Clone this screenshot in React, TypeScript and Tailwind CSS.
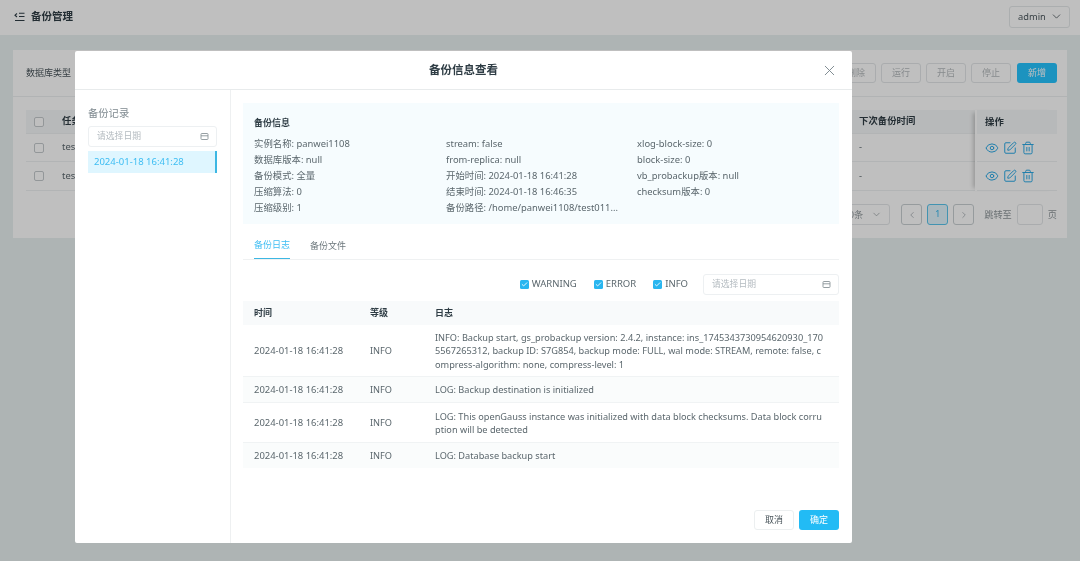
import React from "react";
import { Check, ChevronDown, ChevronLeft, ChevronRight, Eye, SquarePen, Trash2, X } from "lucide-react";

const FONT = "[font-family:'Noto_Sans','Noto_Sans_CJK_SC',sans-serif]";

const infoCols = [
  ["实例名称: panwei1108", "数据库版本: null", "备份模式: 全量", "压缩算法: 0", "压缩级别: 1"],
  ["stream: false", "from-replica: null", "开始时间: 2024-01-18 16:41:28", "结束时间: 2024-01-18 16:46:35", "备份路径: /home/panwei1108/test011..."],
  ["xlog-block-size: 0", "block-size: 0", "vb_probackup版本: null", "checksum版本: 0"],
];

const logs = [
  {
    h: "h-[52px]",
    lines: [
      "INFO: Backup start, gs_probackup version: 2.4.2, instance: ins_1745343730954620930_170",
      "5567265312, backup ID: S7G854, backup mode: FULL, wal mode: STREAM, remote: false, c",
      "ompress-algorithm: none, compress-level: 1",
    ],
  },
  { h: "h-[26px]", lines: ["LOG: Backup destination is initialized"] },
  {
    h: "h-[40px]",
    lines: [
      "LOG: This openGauss instance was initialized with data block checksums. Data block corru",
      "ption will be detected",
    ],
  },
  { h: "h-[25px]", lines: ["LOG: Database backup start"] },
];

const CalendarIcon = () => (
  <svg width="9" height="9" viewBox="0 0 9 9" fill="none" stroke="#8a9499" strokeWidth="0.9">
    <rect x="1" y="1.5" width="7" height="6" rx="0.8" />
    <path d="M1 3.8h7" />
  </svg>
);

const DateInput = ({ className }: { className: string }) => (
  <div className={`flex h-[21px] items-center justify-between rounded-[3px] border border-[#edf0f2] bg-white pl-2 pr-[7px] text-[8.8px] leading-none text-[#b4bbc0] ${className}`}>
    <span>请选择日期</span>
    <CalendarIcon />
  </div>
);

const LogCheck = ({ label }: { label: string }) => (
  <label className="flex items-center gap-[3px] text-[9.5px] text-[#5b676d]">
    <span className="flex h-[9px] w-[9px] items-center justify-center rounded-[1.5px] bg-[#29b6f0]">
      <Check size={7} strokeWidth={3} className="text-white" />
    </span>
    {label}
  </label>
);

const GhostBtn = ({ label }: { label: string }) => (
  <div className="flex h-[20px] w-[40px] items-center justify-center rounded-[3px] border border-[#e3e6e8] text-[9px] text-[#b4b9bc]">
    {label}
  </div>
);

const PageBox = ({ children, active }: { children: React.ReactNode; active?: boolean }) => (
  <div className={`flex h-[21px] w-[21px] items-center justify-center rounded-[3px] border text-[9.5px] ${active ? "border-[#58c4ec] bg-[#e2f5fd] text-[#3ab8ee]" : "border-[#c9cfd2] text-[#a9b0b4]"}`}>
    {children}
  </div>
);

// page behind the dialog
const BackPage = () => (
  <div className="flex h-[561px] flex-col bg-[#e9f0f0]">
    <header className="flex h-[35px] shrink-0 items-center justify-between bg-[#ffffff] pb-[5px] pl-[14px] pr-[10px] pt-[3px]">
      <div className="flex items-center gap-[6px]">
        <svg width="11" height="10" viewBox="0 0 11 10" fill="none" stroke="#2f3d45" strokeWidth="1.1">
          <path d="M3 1.5 1 3.2 3 5M5 1.2h5.5M5 4.5h5.5M1 8.5h9.5" />
        </svg>
        <span className="text-[10.5px] font-bold text-[#2f3d45]">备份管理</span>
      </div>
      <div className="flex h-[22px] w-[61px] items-center justify-between rounded-[3px] border border-[#e5e8ea] pl-2 pr-[6px] text-[9.3px] text-[#4b565c]">
        admin
        <ChevronDown size={13} strokeWidth={1.5} />
      </div>
    </header>
    <div className="mx-[13px] mt-[15px] h-[188px] bg-white">
      <div className="flex h-[47px] items-center justify-between border-b border-[#eceff0] pl-[13px] pr-[10px]">
        <span className="text-[9px] text-[#4b565c]">数据库类型</span>
        <div className="flex items-center gap-[5px]">
          <GhostBtn label="删除" />
          <GhostBtn label="运行" />
          <GhostBtn label="开启" />
          <GhostBtn label="停止" />
          <div className="ml-[1px] flex h-[20px] w-[40px] items-center justify-center rounded-[3px] bg-[#26c4ff] text-[9px] text-white">新增</div>
        </div>
      </div>
      <div className="ml-[13px] mr-[10px] mt-[13px] flex text-[9.4px] text-[#5b676d]">
        <div className="flex-1">
          {[0, 1, 2].map((i) => (
            <div key={i} className={`flex items-center border-b border-[#eef1f2] ${i === 0 ? "h-[24px] bg-[#f5f7f8] font-bold text-[#2f3d45]" : i === 1 ? "h-[28px]" : "h-[29px]"}`}>
              <span className="ml-[8px] h-[10px] w-[10px] rounded-[2px] border border-[#c5cacd] bg-white" />
              <span className="ml-[18px] w-[797px]">{i === 0 ? "任务" : "test"}</span>
              <span>{i === 0 ? "下次备份时间" : "-"}</span>
            </div>
          ))}
        </div>
        <div className="w-[82px] pl-[2px] shadow-[-5px_0_4px_-3px_rgba(0,0,0,0.2)]">
          <div className="flex h-[24px] items-center bg-[#f5f7f8] pl-[8px] font-bold text-[#2f3d45]">操作</div>
          {[0, 1].map((i) => (
            <div key={i} className={`flex items-center gap-[4px] border-b border-[#eef1f2] pl-[8px] text-[#2aa9e6] ${i === 0 ? "h-[28px]" : "h-[29px]"}`}>
              <Eye size={14} strokeWidth={1.7} />
              <SquarePen size={14} strokeWidth={1.7} />
              <Trash2 size={14} strokeWidth={1.7} />
            </div>
          ))}
        </div>
      </div>
      <div className="mt-[13px] flex items-center justify-end gap-[5px] pr-[10px] text-[9.2px] text-[#8f979b]">
        <div className="mr-[6px] flex h-[21px] w-[60px] items-center justify-end gap-[8px] rounded-[3px] border border-[#e3e6e8] pr-[7px]">
          10条
          <ChevronDown size={11} strokeWidth={1.5} />
        </div>
        <PageBox><ChevronLeft size={10} /></PageBox>
        <PageBox active>1</PageBox>
        <PageBox><ChevronRight size={10} /></PageBox>
        <span className="ml-[5px]">跳转至</span>
        <div className="h-[21px] w-[26px] rounded-[3px] border border-[#e3e6e8]" />
        <span>页</span>
      </div>
    </div>
  </div>
);

const App = () => {
  return (
    <div className={`relative h-[561px] w-[1080px] overflow-hidden blur-[0.3px] ${FONT}`}>
      <BackPage />
      <div className="absolute inset-0 bg-black/25" />

      {/* Dialog */}
      <div className="absolute left-[75px] top-[51px] flex h-[492px] w-[777px] flex-col rounded-[2px] bg-white">
        <div className="relative flex h-[39px] shrink-0 items-center justify-center border-b border-[#e8ebec]">
          <span className="text-[11.5px] font-bold text-[#2f3d45]">备份信息查看</span>
          <X size={17} strokeWidth={1.3} className="absolute right-[14px] top-[11px] text-[#77848a]" />
        </div>

        <div className="flex min-h-0 flex-1">
          {/* Left panel */}
          <aside className="w-[156px] shrink-0 border-r border-[#eef0f1] pl-[13px] pr-[13px] pt-[16px]">
            <div className="text-[10.3px] leading-[15px] text-[#7e898f]">备份记录</div>
            <DateInput className="mt-[5px]" />
            <div className="mt-[4px] flex h-[22px] items-center border-r-[2px] border-[#3db7e3] bg-[#dff6ff] pl-[6px] text-[9.5px] text-[#3dbdf3]">
              2024-01-18 16:41:28
            </div>
          </aside>

          {/* Right panel */}
          <main className="flex min-w-0 flex-1 flex-col pl-[12px] pr-[13px] pt-[13px]">
            <section className="h-[121px] shrink-0 bg-[#f6fcfe] px-[11px] pt-[13px] text-[9.4px] leading-[16px] text-[#5b676d]">
              <div className="text-[9px] font-bold leading-[14px] text-[#2f3d45]">备份信息</div>
              <div className="mt-[6px] grid grid-cols-[192px_191px_1fr]">
                {infoCols.map((col, i) => (
                  <div key={i}>
                    {col.map((t) => (
                      <div key={t} className="whitespace-nowrap">{t}</div>
                    ))}
                  </div>
                ))}
              </div>
            </section>

            <nav className="flex h-[36px] shrink-0 items-end gap-[20px] border-b border-[#eff1f2] px-[11px] text-[9px] text-[#6c777c]">
              <span className="border-b-[1.5px] border-[#3db7e3] pb-[7px] text-[#3dbdf3]">备份日志</span>
              <span className="pb-[7px]">备份文件</span>
            </nav>

            <div className="mt-[14px] flex h-[21px] shrink-0 items-center justify-end">
              <div className="flex items-center gap-[17px]">
                <LogCheck label="WARNING" />
                <LogCheck label="ERROR" />
                <LogCheck label="INFO" />
              </div>
              <DateInput className="ml-[15px] w-[136px]" />
            </div>

            <div className="mt-[6px] shrink-0 text-[9.2px] text-[#5b676d]">
              <div className="flex h-[24px] items-center bg-[#f8fafb] pl-[11px] text-[9px] font-bold text-[#2f3d45]">
                <span className="w-[116px]">时间</span>
                <span className="w-[65px]">等级</span>
                <span>日志</span>
              </div>
              {logs.map((row, i) => (
                <div key={i} className={`flex items-center pl-[11px] pt-[1px] ${row.h} ${i === 3 ? "" : "border-b border-[#f0f3f4]"} ${i % 2 === 1 ? "bg-[#fafcfc]" : "bg-white"}`}>
                  <span className="w-[116px] shrink-0 whitespace-nowrap text-[9.45px]">2024-01-18 16:41:28</span>
                  <span className="w-[65px] shrink-0">INFO</span>
                  <div className="leading-[13.5px]">
                    {row.lines.map((l) => (
                      <div key={l} className="whitespace-nowrap">{l}</div>
                    ))}
                  </div>
                </div>
              ))}
            </div>

            <div className="mb-[13px] mt-auto flex justify-end gap-[5px] text-[9px]">
              <div className="flex h-[20px] w-[40px] items-center justify-center rounded-[3px] border border-[#eceff0] text-[#4b565c]">取消</div>
              <div className="flex h-[20px] w-[40px] items-center justify-center rounded-[3px] bg-[#22bbf5] text-white">确定</div>
            </div>
          </main>
        </div>
      </div>
    </div>
  );
};

export default App;
